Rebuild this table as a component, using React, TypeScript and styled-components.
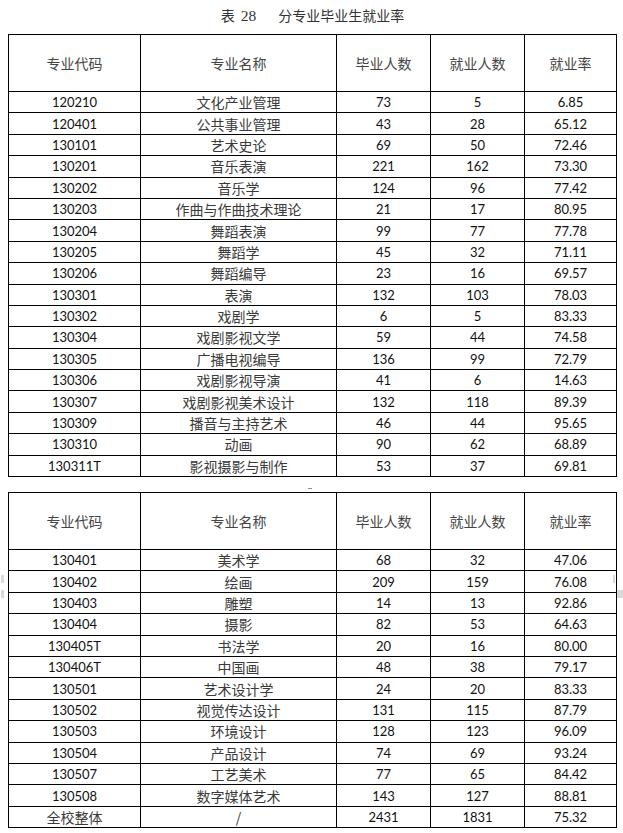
import React from "react";
import styled, { createGlobalStyle } from "styled-components";

type Row = [string, string, string, string, string];

const firstRows: Row[] = [
  ["120210", "文化产业管理", "73", "5", "6.85"],
  ["120401", "公共事业管理", "43", "28", "65.12"],
  ["130101", "艺术史论", "69", "50", "72.46"],
  ["130201", "音乐表演", "221", "162", "73.30"],
  ["130202", "音乐学", "124", "96", "77.42"],
  ["130203", "作曲与作曲技术理论", "21", "17", "80.95"],
  ["130204", "舞蹈表演", "99", "77", "77.78"],
  ["130205", "舞蹈学", "45", "32", "71.11"],
  ["130206", "舞蹈编导", "23", "16", "69.57"],
  ["130301", "表演", "132", "103", "78.03"],
  ["130302", "戏剧学", "6", "5", "83.33"],
  ["130304", "戏剧影视文学", "59", "44", "74.58"],
  ["130305", "广播电视编导", "136", "99", "72.79"],
  ["130306", "戏剧影视导演", "41", "6", "14.63"],
  ["130307", "戏剧影视美术设计", "132", "118", "89.39"],
  ["130309", "播音与主持艺术", "46", "44", "95.65"],
  ["130310", "动画", "90", "62", "68.89"],
  ["130311T", "影视摄影与制作", "53", "37", "69.81"],
];

const secondRows: Row[] = [
  ["130401", "美术学", "68", "32", "47.06"],
  ["130402", "绘画", "209", "159", "76.08"],
  ["130403", "雕塑", "14", "13", "92.86"],
  ["130404", "摄影", "82", "53", "64.63"],
  ["130405T", "书法学", "20", "16", "80.00"],
  ["130406T", "中国画", "48", "38", "79.17"],
  ["130501", "艺术设计学", "24", "20", "83.33"],
  ["130502", "视觉传达设计", "131", "115", "87.79"],
  ["130503", "环境设计", "128", "123", "96.09"],
  ["130504", "产品设计", "74", "69", "93.24"],
  ["130507", "工艺美术", "77", "65", "84.42"],
  ["130508", "数字媒体艺术", "143", "127", "88.81"],
];

const headers = ["专业代码", "专业名称", "毕业人数", "就业人数", "就业率"];
const widths = [132, 196, 94, 94, 92];

const GlobalStyle = createGlobalStyle`
  html, body {
    margin: 0;
    padding: 0;
    background: #fff;
  }
  body {
    font-family: "Noto Sans CJK SC", sans-serif;
  }
`;

const Page = styled.div`
  position: relative;
  width: 623px;
  height: 833px;
  padding: 0 0 0 8px;
  box-sizing: border-box;
  overflow: hidden;
`;

const Title = styled.div`
  height: 34px;
  width: 609px;
  display: flex;
  justify-content: center;
  align-items: baseline;
  gap: 22px;
  padding-top: 5px;
  box-sizing: border-box;
  font-family: "Noto Sans CJK SC", sans-serif;
  font-size: 14px;
  line-height: 20px;
  color: #333;
`;

const TitleNo = styled.span`
  display: flex;
  align-items: baseline;
  gap: 6px;
`;

const Num = styled.span`
  font-family: "Liberation Serif", serif;
  font-size: 15.5px;
`;

const Table = styled.table`
  border-collapse: collapse;
  table-layout: fixed;
  width: 609px;
  border: 1.5px solid #000;
`;

const HeadCell = styled.th`
  height: 56px;
  padding: 0;
  border: 1px solid #000;
  font-family: "Noto Sans CJK SC", sans-serif;
  font-weight: 400;
  font-size: 14px;
  color: #444;
  text-align: center;
  vertical-align: middle;
`;

const Cell = styled.td<{ $cjk?: boolean }>`
  height: 20.4px;
  padding: 0;
  border: 1px solid #000;
  text-align: center;
  vertical-align: middle;
  line-height: 20px;
  font-family: ${(p) =>
    p.$cjk
      ? `"Noto Sans CJK SC", sans-serif`
      : `Lato, "Liberation Sans", sans-serif`};
  font-size: ${(p) => (p.$cjk ? "14px" : "13px")};
  color: ${(p) => (p.$cjk ? "#3a3a3a" : "#111")};
`;

const Gap = styled.div`
  position: relative;
  height: 15px;
`;

const Speck = styled.span`
  position: absolute;
  left: 300px;
  top: 11px;
  width: 4px;
  height: 1px;
  background: #8a8fb0;
`;

const Mark = styled.span<{ $x: number; $y: number; $w: number; $h: number }>`
  position: absolute;
  left: ${(p) => p.$x}px;
  top: ${(p) => p.$y}px;
  width: ${(p) => p.$w}px;
  height: ${(p) => p.$h}px;
  background: #d9d9d9;
`;

const DataTable: React.FC<{ rows: Row[]; total?: boolean }> = ({ rows, total }) => (
  <Table>
    <colgroup>
      {widths.map((w, i) => (
        <col key={i} style={{ width: w }} />
      ))}
    </colgroup>
    <thead>
      <tr>
        {headers.map((h) => (
          <HeadCell key={h}>{h}</HeadCell>
        ))}
      </tr>
    </thead>
    <tbody>
      {rows.map((r) => (
        <tr key={r[0]}>
          <Cell>{r[0]}</Cell>
          <Cell $cjk>{r[1]}</Cell>
          <Cell>{r[2]}</Cell>
          <Cell>{r[3]}</Cell>
          <Cell>{r[4]}</Cell>
        </tr>
      ))}
      {total && (
        <tr>
          <Cell $cjk>全校整体</Cell>
          <Cell $cjk>/</Cell>
          <Cell>2431</Cell>
          <Cell>1831</Cell>
          <Cell>75.32</Cell>
        </tr>
      )}
    </tbody>
  </Table>
);

const App: React.FC = () => (
  <Page>
    <GlobalStyle />
    <Title>
      <TitleNo>
        <span>表</span>
        <Num>28</Num>
      </TitleNo>
      <span>分专业毕业生就业率</span>
    </Title>
    <DataTable rows={firstRows} />
    <Gap>
      <Speck />
    </Gap>
    <DataTable rows={secondRows} total />
    <Mark $x={1} $y={575} $w={3} $h={8} />
    <Mark $x={1} $y={590} $w={3} $h={8} />
    <Mark $x={613} $y={575} $w={2} $h={8} />
    <Mark $x={617} $y={590} $w={6} $h={8} />
  </Page>
);

export default App;
